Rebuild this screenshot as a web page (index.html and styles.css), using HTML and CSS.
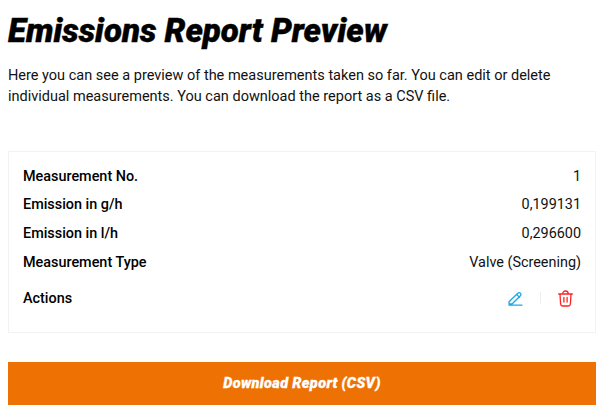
FILE: index.html
```html
<!DOCTYPE html><html lang="en">
<head>
  <meta charset="UTF-8">
  <title>Emissions Report Preview</title>
  <link rel="stylesheet" href="styles.css">
</head>
<body>
  <h1 class="title">Emissions Report Preview</h1>
  <p class="intro">Here you can see a preview of the measurements taken so far. You can edit or delete individual measurements. You can download the report as a CSV file.</p>
  <div class="card">
    <div class="row"><span class="label">Measurement No.</span><span>1</span></div>
    <div class="row"><span class="label">Emission in g/h</span><span>0,199131</span></div>
    <div class="row"><span class="label">Emission in l/h</span><span>0,296600</span></div>
    <div class="row"><span class="label">Measurement Type</span><span>Valve (Screening)</span></div>
    <div class="row actions-row">
      <span class="label">Actions</span>
      <div class="actions">
        <svg class="icon edit" viewBox="0 0 15 15" aria-label="Edit"><path d="M1 10.800 9.800 2.200a1.800 1.800 0 0 1 2.600 0 1.800 1.800 0 0 1 0 2.600L4 13H1ZM8.600 3.400l2.800 2.800M1 14.200h13"/></svg>
        <span class="divider"></span>
        <svg class="icon trash" viewBox="0 0 15 17" aria-label="Delete"><path d="M.7 4h13.600M4.800 3.800C4.800 1.800 5.800 1 7.500 1s2.700.8 2.700 2.800M2 4.200l.6 9.800c.1 1.200.9 2 2 2h5.800c1.100 0 1.900-.8 2-2l.6-9.800M5.900 7.500v4.600M9.100 7.500v4.600"/></svg>
      </div>
    </div>
  </div>
  <button class="download">Download Report (CSV)</button>
</body>
</html>
```

FILE: styles.css
```css
* {
  margin: 0;
  padding: 0;
  box-sizing: border-box;
}

body {
  background-color: #fff;
  color: #111;
  font-family: Roboto, sans-serif;
  font-size: 14.5px;
  padding: 0 10px 0 8px;
}

.title {
  padding-top: 13px;
  font-size: 33px;
  line-height: 36px;
  font-weight: 900;
  font-style: italic;
  color: #000;
  white-space: nowrap;
  -webkit-text-stroke: 0.4px #000;
}

.intro {
  margin-top: 16px;
  width: 560px;
  line-height: 21px;
}

.card {
  margin-top: 44px;
  height: 182px;
  padding: 10px 14px 0;
  border: 1px solid #f2f2f2;
  font-size: 14.4px;
}

.row {
  display: flex;
  justify-content: space-between;
  align-items: center;
  height: 28.6px;
}

.label {
  font-weight: 500;
  color: #000;
}

.actions-row {
  height: 46px;
  padding-bottom: 2px;
}

.actions {
  display: flex;
  align-items: center;
  gap: 17px;
  padding-right: 8px;
}

.icon {
  width: 15px;
  fill: none;
  stroke-width: 1.3;
  stroke-linecap: round;
  stroke-linejoin: round;
}

.edit {
  height: 15px;
  stroke: #1aa7ec;
}

.trash {
  height: 17px;
  stroke: #f22;
}

.divider {
  width: 1px;
  height: 12px;
  background-color: #eee;
}

.download {
  display: block;
  width: 100%;
  height: 43px;
  margin-top: 29px;
  border: none;
  background-color: #ee7203;
  color: #fff;
  font-family: Roboto, sans-serif;
  font-size: 14.5px;
  font-weight: 900;
  font-style: italic;
  letter-spacing: 0.35px;
  -webkit-text-stroke: 0.3px #fff;
}
```
